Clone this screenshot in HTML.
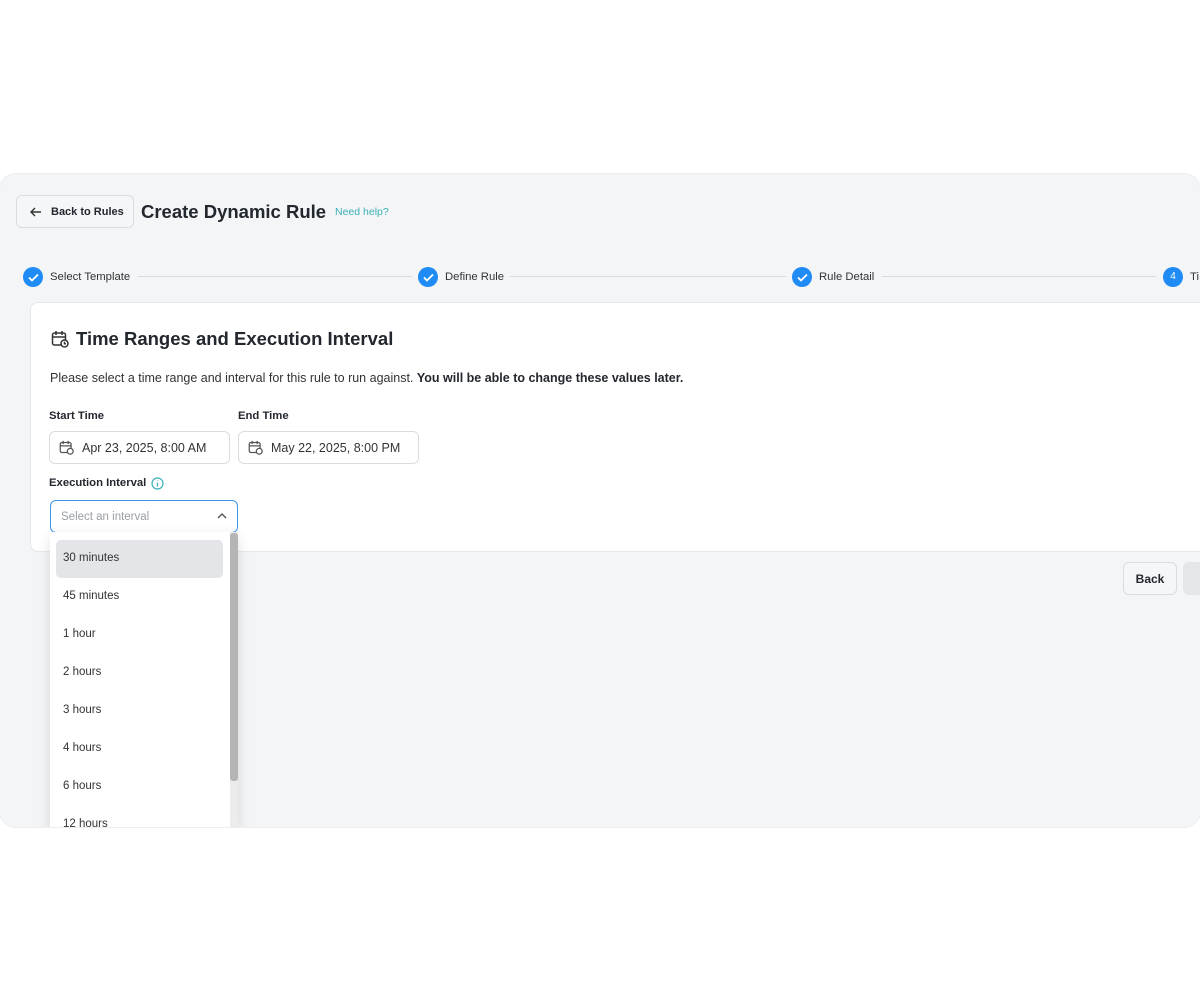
<!DOCTYPE html>
<html><head><style>
*{box-sizing:border-box;margin:0;padding:0}
body{width:1200px;height:1000px;background:#fff;font-family:"Liberation Sans",sans-serif;color:#23272e;position:relative;overflow:hidden}
.frame{position:absolute;left:0;top:174px;width:1200px;height:653px;background:#f3f5f7;border-radius:16px;overflow:hidden;box-shadow:0 0 0 1px #eceef1}
.abs{position:absolute}
.btn{border:1px solid #d9dce1;border-radius:6px;background:#f5f6f8;font-size:11px;font-weight:bold;display:flex;align-items:center}
.step{position:absolute;top:92px;display:flex;align-items:center;font-size:11.3px;color:#333;line-height:22px}
.circ{width:20px;height:20px;border-radius:50%;background:#1f8bf5;display:flex;align-items:center;justify-content:center;margin-right:7px;color:#fff;font-size:10px}
.line{position:absolute;top:102px;height:1px;background:#d8dbe0}
.card{position:absolute;left:30px;top:128px;width:1200px;height:250px;background:#fff;border:1px solid #e5e7eb;border-radius:8px}
.inp{position:absolute;height:33px;border:1px solid #d9dce1;border-radius:6px;display:flex;align-items:center;font-size:12.5px;color:#333;padding-left:9px;background:#fff}
.lbl{position:absolute;font-size:11.3px;font-weight:bold;color:#23272e}
.dd{position:absolute;left:50px;top:358px;width:188px;height:300px;background:#fff;box-shadow:0 4px 12px rgba(0,0,0,.12)}
.opt{position:absolute;left:13px;font-size:11.5px;color:#333}
</style></head><body>
<div class="frame">
 <div class="btn abs" style="left:16px;top:21px;width:118px;height:33px;padding-left:12px"><svg width="14" height="12" viewBox="0 0 14 12" style="margin-right:8px"><path d="M12 6H2M6 2L2 6l4 4" fill="none" stroke="#333" stroke-width="1.4"/></svg>Back to Rules</div>
 <div class="abs" style="left:141px;top:27px;font-size:18.5px;font-weight:bold;color:#23272e">Create Dynamic Rule</div>
 <div class="abs" style="left:335px;top:32px;font-size:10.5px;color:#3bb1b8">Need help?</div>

 <div class="step" style="left:23px"><div class="circ"><svg width="11" height="9" viewBox="0 0 11 9"><path d="M1 4.5l3 3 6-6" fill="none" stroke="#fff" stroke-width="1.8"/></svg></div>Select Template</div>
 <div class="line" style="left:138px;width:274px"></div>
 <div class="step" style="left:418px"><div class="circ"><svg width="11" height="9" viewBox="0 0 11 9"><path d="M1 4.5l3 3 6-6" fill="none" stroke="#fff" stroke-width="1.8"/></svg></div>Define Rule</div>
 <div class="line" style="left:510px;width:276px"></div>
 <div class="step" style="left:792px"><div class="circ"><svg width="11" height="9" viewBox="0 0 11 9"><path d="M1 4.5l3 3 6-6" fill="none" stroke="#fff" stroke-width="1.8"/></svg></div>Rule Detail</div>
 <div class="line" style="left:882px;width:274px"></div>
 <div class="step" style="left:1163px"><div class="circ">4</div>Ti</div>

 <div class="card">
  <svg class="abs" style="left:20px;top:27px" width="18" height="18" viewBox="0 0 18 18" fill="none" stroke="#333" stroke-width="1.5"><rect x="1.5" y="3" width="13" height="12" rx="2"/><path d="M1.5 7h13M5 1v4M11 1v4"/><circle cx="13.5" cy="13.5" r="3.5" fill="#fff"/><path d="M13.5 11.8v1.9h1.4"/></svg>
  <div class="abs" style="left:45px;top:25px;font-size:18.5px;font-weight:bold">Time Ranges and Execution Interval</div>
  <div class="abs" style="left:19px;top:68px;font-size:12.5px;color:#333">Please select a time range and interval for this rule to run against. <b style="color:#23272e">You will be able to change these values later.</b></div>
 </div>
 <div class="lbl" style="left:49px;top:236px">Start Time</div>
 <div class="lbl" style="left:238px;top:236px">End Time</div>
 <div class="inp" style="left:49px;top:257px;width:181px"><svg width="15" height="15" viewBox="0 0 18 18" fill="none" stroke="#555" stroke-width="1.5" style="margin-right:8px"><rect x="1.5" y="3" width="13" height="12" rx="2"/><path d="M1.5 7h13M5 1v4M11 1v4"/><circle cx="13.5" cy="13.5" r="3.5" fill="#fff"/></svg>Apr 23, 2025, 8:00 AM</div>
 <div class="inp" style="left:238px;top:257px;width:181px"><svg width="15" height="15" viewBox="0 0 18 18" fill="none" stroke="#555" stroke-width="1.5" style="margin-right:8px"><rect x="1.5" y="3" width="13" height="12" rx="2"/><path d="M1.5 7h13M5 1v4M11 1v4"/><circle cx="13.5" cy="13.5" r="3.5" fill="#fff"/></svg>May 22, 2025, 8:00 PM</div>
 <div class="lbl" style="left:49px;top:303px">Execution Interval</div>
 <svg class="abs" style="left:151px;top:303px" width="13" height="13" viewBox="0 0 13 13"><circle cx="6.5" cy="6.5" r="5.5" fill="none" stroke="#3bb1b8" stroke-width="1.2"/><path d="M6.5 5.5v4M6.5 3.5v.5" stroke="#3bb1b8" stroke-width="1.3"/></svg>
 <div class="inp" style="left:50px;top:326px;width:188px;border:1.5px solid #3d96ea;font-size:11.5px;color:#9a9ea5;padding-left:10px">Select an interval<svg class="abs" style="left:166px;top:11px" width="10" height="7" viewBox="0 0 10 7"><path d="M1 6l4-4 4 4" fill="none" stroke="#555" stroke-width="1.4"/></svg></div>

 <div class="btn abs" style="left:1123px;top:388px;width:54px;height:33px;justify-content:center;background:#f5f6f8;font-size:12px">Back</div>
 <div class="abs" style="left:1183px;top:388px;width:30px;height:33px;background:#e4e6ea;border-radius:6px"></div>

 <div class="dd">
  <div class="abs" style="left:6px;top:8px;width:167px;height:38px;background:#e3e5e8;border-radius:5px"></div>
  <div class="opt" style="top:20px">30 minutes</div>
  <div class="opt" style="top:58px">45 minutes</div>
  <div class="opt" style="top:96px">1 hour</div>
  <div class="opt" style="top:134px">2 hours</div>
  <div class="opt" style="top:172px">3 hours</div>
  <div class="opt" style="top:210px">4 hours</div>
  <div class="opt" style="top:248px">6 hours</div>
  <div class="opt" style="top:286px">12 hours</div>
  <div class="abs" style="left:180px;top:0;width:8px;height:300px;background:#ececec"></div>
  <div class="abs" style="left:180px;top:1px;width:8px;height:248px;background:#b5b5b5;border-radius:3px"></div>
 </div>
</div>
</body></html>
